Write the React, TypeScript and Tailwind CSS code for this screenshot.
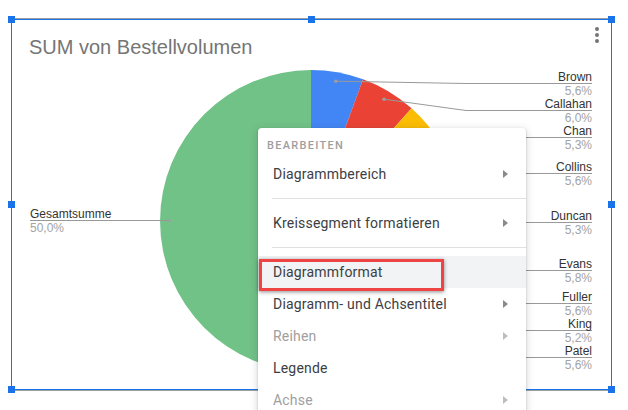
import React from "react";

type Slice = { name: string; p: number; color: string; row: number };

const slices: Slice[] = [
  { name: "Brown", p: 5.6, color: "#4285f4", row: 83 },
  { name: "Callahan", p: 6.0, color: "#ea4335", row: 110 },
  { name: "Chan", p: 5.3, color: "#fbbc04", row: 137 },
  { name: "Collins", p: 5.6, color: "#34a853", row: 173 },
  { name: "Duncan", p: 5.3, color: "#ff6d01", row: 222 },
  { name: "Evans", p: 5.8, color: "#46bdc6", row: 270 },
  { name: "Fuller", p: 5.6, color: "#7baaf7", row: 303 },
  { name: "King", p: 5.2, color: "#f07b72", row: 330 },
  { name: "Patel", p: 5.6, color: "#fcd04f", row: 357 },
  { name: "Gesamtsumme", p: 50.0, color: "#71c287", row: 220 },
];

const CX = 311;
const CY = 221;
const R = 151;
const RD = 142;

function pt(f: number, r: number): [number, number] {
  const a = f * Math.PI * 2;
  return [CX + r * Math.sin(a), CY - r * Math.cos(a)];
}

function fmt(p: number) {
  return p.toFixed(1).replace(".", ",") + "%";
}

function PieChart() {
  const total = slices.reduce((s, x) => s + x.p, 0);
  let acc = 0;
  const parts = slices.map((s) => {
    const f0 = acc / total;
    acc += s.p;
    const f1 = acc / total;
    const [x0, y0] = pt(f0, R);
    const [x1, y1] = pt(f1, R);
    const large = f1 - f0 > 0.5 ? 1 : 0;
    const d = `M${CX} ${CY} L${x0} ${y0} A${R} ${R} 0 ${large} 1 ${x1} ${y1} Z`;
    const [dx, dy] = pt((f0 + f1) / 2, RD);
    return { ...s, d, dx, dy };
  });

  return (
    <svg
      className="absolute inset-0"
      width={599}
      height={369}
      viewBox="12 20 599 369"
    >
      {parts.map((s) => (
        <path key={s.name} d={s.d} fill={s.color} />
      ))}
      {parts.map((s) => {
        const y = s.row + 0.5;
        const left = s.name === "Gesamtsumme";
        const points = left
          ? `${s.dx},${y} 30,${y}`
          : `${s.dx},${s.dy} 466,${y} 592,${y}`;
        return (
          <g key={s.name + "l"}>
            <polyline points={points} fill="none" stroke="#999999" strokeWidth={1} />
            <circle cx={s.dx} cy={left ? y : s.dy} r={1.8} fill="#9e9e9e" />
            <text
              x={left ? 30 : 592}
              y={s.row - 2}
              textAnchor={left ? "start" : "end"}
              fontSize={12}
              fill="#333333"
              fontFamily="'Liberation Sans', Arial, sans-serif"
            >
              {s.name}
            </text>
            <text
              x={left ? 30 : 592}
              y={s.row + 11.5}
              textAnchor={left ? "start" : "end"}
              fontSize={12}
              fill="#a3a3a3"
              fontFamily="'Liberation Sans', Arial, sans-serif"
            >
              {fmt(s.p)}
            </text>
          </g>
        );
      })}
      <circle cx={597} cy={29} r={2} fill="#757575" />
      <circle cx={597} cy={35} r={2} fill="#757575" />
      <circle cx={597} cy={41} r={2} fill="#757575" />
    </svg>
  );
}

function Arrow({ disabled }: { disabled?: boolean }) {
  return (
    <svg width="5" height="8" viewBox="0 0 5 8">
      <path d="M0 0 L5 4 L0 8 Z" fill={disabled ? "#bdbdbd" : "#8a8a8a"} />
    </svg>
  );
}

function Item({
  label,
  arrow,
  disabled,
  active,
}: {
  label: string;
  arrow?: boolean;
  disabled?: boolean;
  active?: boolean;
}) {
  return (
    <div
      className={`relative h-[32px] flex items-center justify-between pl-[15px] pr-[18px] text-[14px] tracking-[0.2px] ${
        active ? "bg-[#f1f3f4]" : ""
      } ${disabled ? "text-[#a0a0a0]" : "text-[#3c4043]"}`}
    >
      <span>{label}</span>
      {arrow && <Arrow disabled={disabled} />}
      {active && (
        <div className="absolute left-[1px] top-[3px] w-[185px] h-[32px] border-[3px] border-[#ef4444] shadow-[0_1px_4px_rgba(0,0,0,0.45)]" />
      )}
    </div>
  );
}

function Sep() {
  return <div className="my-[8px] ml-[14px] h-px bg-[#e0e0e0]" />;
}

function Menu() {
  return (
    <div className="absolute left-[246px] top-[108px] w-[268px] h-[300px] bg-white rounded-[4px] shadow-[0_2px_6px_2px_rgba(60,64,67,0.15),0_1px_2px_rgba(60,64,67,0.3)] font-['Roboto',sans-serif]">
      <div className="pt-[12px] pb-[7px] pl-[9px] text-[11px] leading-none font-medium tracking-[1.3px] text-[#9e9e9e]">
        BEARBEITEN
      </div>
      <Item label="Diagrammbereich" arrow />
      <Sep />
      <Item label="Kreissegment formatieren" arrow />
      <Sep />
      <Item label="Diagrammformat" active />
      <Item label="Diagramm- und Achsentitel" arrow />
      <Item label="Reihen" arrow disabled />
      <Item label="Legende" />
      <Item label="Achse" arrow disabled />
    </div>
  );
}

function Handle({ cls }: { cls: string }) {
  return <div className={`absolute w-[7px] h-[7px] bg-[#1a73e8] ${cls}`} />;
}

export default function App() {
  return (
    <div className="relative w-[628px] h-[410px] overflow-hidden bg-white font-['Liberation_Sans',Arial,sans-serif]">
      <div className="pt-[18px] pl-[11px]">
        <div className="w-[601px] border-y border-[#9e9e9e]">
          <div className="relative w-[601px] h-[371px] border border-[#1a73e8] pt-[17px] pl-[17px]">
            <PieChart />
            <div className="relative text-[20px] leading-none text-[#757575]">
              SUM von Bestellvolumen
            </div>
            <Handle cls="left-[-4px] top-[-4px]" />
            <Handle cls="left-[296px] top-[-4px]" />
            <Handle cls="left-[596px] top-[-4px]" />
            <Handle cls="left-[-4px] top-[181px]" />
            <Handle cls="left-[596px] top-[181px]" />
            <Handle cls="left-[-4px] top-[366px]" />
            <Handle cls="left-[296px] top-[366px]" />
            <Handle cls="left-[596px] top-[366px]" />
            <Menu />
          </div>
        </div>
      </div>
    </div>
  );
}
